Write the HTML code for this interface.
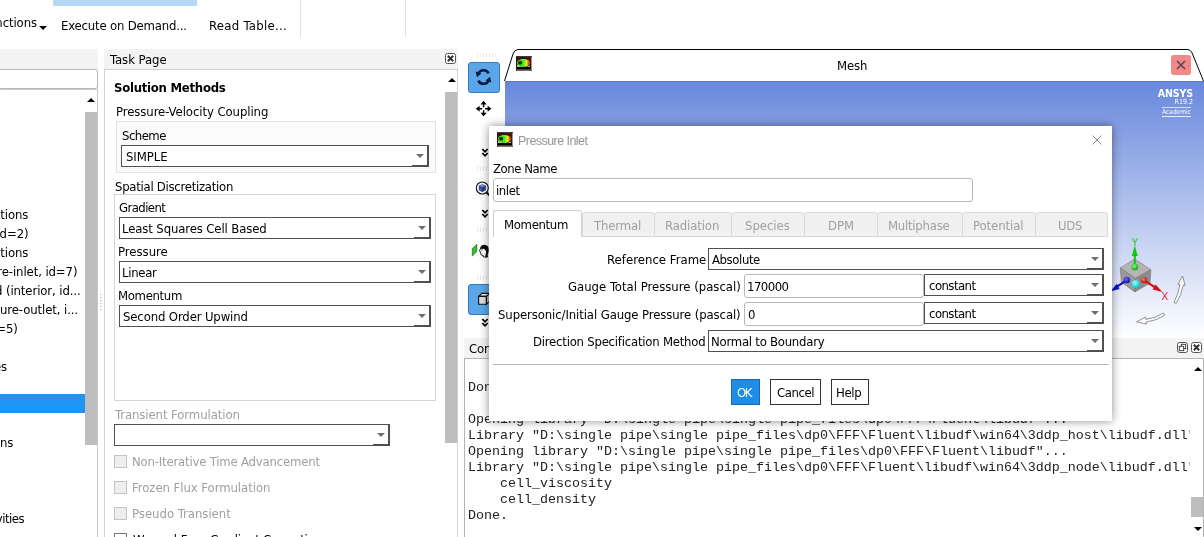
<!DOCTYPE html>
<html><head><meta charset="utf-8">
<style>
html,body{margin:0;padding:0;}
body{width:1204px;height:537px;overflow:hidden;position:relative;background:#f0f0f0;font-family:"DejaVu Sans Condensed","Liberation Sans",sans-serif;font-size:13px;letter-spacing:-0.1px;color:#000;}
.a{position:absolute;}
.t{will-change:transform;position:absolute;white-space:nowrap;line-height:16px;height:16px;margin-top:1px;}
.g{color:#a0a0a0;}
.combo{position:absolute;background:#fff;border:1px solid #505050;border-right:2px solid #505050;box-sizing:border-box;height:22px;}
.combo .t{left:3px;top:2px;}
.combo:after{content:"";position:absolute;right:3px;top:8px;border-left:4px solid transparent;border-right:4px solid transparent;border-top:4px solid #6e6e6e;}
.combo:before{content:"";position:absolute;right:-1px;bottom:0;width:15px;height:1px;background:#505050;border-right:1px solid #505050;}
.cb{position:absolute;width:13px;height:13px;box-sizing:border-box;border:1px solid #c4c4c4;background:#eee;}
.tab{position:absolute;top:212px;height:25px;box-sizing:border-box;border:1px solid #d9d9d9;background:#f0f0f0;color:#a0a0a0;text-align:center;line-height:25px;border-radius:3px 3px 0 0;}
.inp{position:absolute;box-sizing:border-box;border:1px solid #b8b8b8;border-radius:3px;background:#fff;}
.mono{font-family:"Liberation Mono",monospace;font-size:13.33px;letter-spacing:0;color:#222;}
.btn{position:absolute;top:379px;height:26px;box-sizing:border-box;border:1px solid #333;background:#fff;text-align:center;line-height:25px;}
</style></head><body>

<!-- top ribbon -->
<div class="a" style="left:0;top:0;width:1204px;height:49px;background:#fff;"></div>
<div class="a" style="left:53px;top:0;width:144px;height:6px;background:#b5d9f5;"></div>
<div class="t" style="left:-12px;top:14px;">unctions</div>
<div class="a" style="left:39px;top:26px;border-left:4px solid transparent;border-right:4px solid transparent;border-top:4px solid #000;"></div>
<div class="t" style="top:17px;left:61.40px;letter-spacing:-0.187px">Execute on Demand...</div>
<div class="t" style="top:17px;left:209.20px;letter-spacing:0.283px">Read Table...</div>
<div class="a" style="left:300px;top:0;width:1px;height:37px;background:#e2e2e2;"></div>
<div class="a" style="left:405px;top:0;width:1px;height:37px;background:#e2e2e2;"></div>

<!-- left tree panel -->
<div class="a" style="left:0;top:49px;width:98px;height:20px;background:#f3f3f3;"></div>
<div class="a" style="left:98px;top:49px;width:6px;height:488px;background:#fff;"></div>
<div class="a" style="left:-2px;top:69px;width:100px;height:20px;box-sizing:border-box;border:1px solid #b8b8b8;border-radius:3px;background:#fff;"></div>
<div class="a" style="left:-2px;top:89px;width:100px;height:460px;box-sizing:border-box;border:1px solid #c8c8c8;background:#fff;"></div>
<div class="a" style="left:85px;top:91px;width:11px;height:446px;background:#fff;"></div>
<div class="a" style="left:85px;top:112px;width:12px;height:333px;background:#bdbdbd;"></div>
<div class="a" style="left:87px;top:98px;border-left:4px solid transparent;border-right:4px solid transparent;border-bottom:4px solid #000;"></div>
<div class="t" style="left:-6px;top:206px;">ctions</div>
<div class="t" style="left:-8px;top:225px;">(id=2)</div>
<div class="t" style="left:-6px;top:244px;">ctions</div>
<div class="t" style="left:-10px;top:263px;">ure-inlet, id=7)</div>
<div class="t" style="left:-5px;top:282px;">d (interior, id...</div>
<div class="t" style="left:-6px;top:301px;">sure-outlet, i...</div>
<div class="t" style="left:-11px;top:320px;">d=5)</div>
<div class="t" style="left:-6px;top:358px;">es</div>
<div class="a" style="left:0;top:394px;width:85px;height:19px;background:#2094f4;"></div>
<div class="t" style="left:-7px;top:434px;">ons</div>
<div class="t" style="left:-11px;top:510px;letter-spacing:-0.5px;">tivities</div>

<div class="a" style="left:100px;top:293px;width:2px;height:18px;background-image:radial-gradient(circle,#cfcfcf 0.7px,transparent 0.9px);background-size:2px 3px;"></div>
<!-- task page -->
<div class="a" style="left:104px;top:49px;width:354px;height:20px;background:#f3f3f3;"></div>
<div class="t" style="top:51px;left:110.00px;letter-spacing:-0.037px">Task Page</div>
<svg class="a" style="left:445px;top:53px;" width="11" height="11" viewBox="0 0 11 11"><rect x="0.5" y="0.5" width="10" height="10" rx="2" fill="#fff" stroke="#555"/><path d="M2.8 2.8 L8.2 8.2 M8.2 2.8 L2.8 8.2" stroke="#333" stroke-width="2"/></svg>
<div class="a" style="left:104px;top:69px;width:354px;height:480px;box-sizing:border-box;border:1px solid #d0d0d0;background:#fff;"></div>
<div class="a" style="left:445px;top:92px;width:12px;height:351px;background:#bdbdbd;"></div>
<div class="a" style="left:448px;top:78px;border-left:4px solid transparent;border-right:4px solid transparent;border-bottom:4px solid #000;"></div>
<div class="a" style="left:458px;top:49px;width:8px;height:488px;background:#fff;"></div>

<div class="t" style="top:79px;font-weight:bold;left:114.20px;letter-spacing:-0.262px">Solution Methods</div>
<div class="t" style="top:103px;left:115.60px;letter-spacing:-0.079px">Pressure-Velocity Coupling</div>
<div class="a" style="left:116px;top:121px;width:320px;height:52px;box-sizing:border-box;border:1px solid #e3e3e3;background:#fbfbfb;"></div>
<div class="t" style="top:127px;left:121.60px;letter-spacing:-0.533px">Scheme</div>
<div class="combo" style="left:121px;top:145px;width:308px;"></div><div class="t" style="top:148px;left:125.60px;letter-spacing:-0.066px">SIMPLE</div>
<div class="t" style="top:178px;left:114.70px;letter-spacing:-0.272px">Spatial Discretization</div>
<div class="a" style="left:114px;top:194px;width:322px;height:207px;box-sizing:border-box;border:1px solid #d5d5d5;background:#fff;"></div>
<div class="t" style="top:199px;left:119.40px;letter-spacing:-0.575px">Gradient</div>
<div class="combo" style="left:119px;top:217px;width:312px;"></div><div class="t" style="top:220px;left:122.20px;letter-spacing:-0.120px">Least Squares Cell Based</div>
<div class="t" style="top:243px;left:118.40px;letter-spacing:-0.009px">Pressure</div>
<div class="combo" style="left:119px;top:261px;width:312px;"></div><div class="t" style="top:264px;left:122.20px;letter-spacing:-0.288px">Linear</div>
<div class="t" style="top:287px;left:118.40px;letter-spacing:-0.336px">Momentum</div>
<div class="combo" style="left:119px;top:305px;width:312px;"></div><div class="t" style="top:308px;left:123.20px;letter-spacing:-0.134px">Second Order Upwind</div>
<div class="t g" style="top:406px;left:115.30px;letter-spacing:-0.079px">Transient Formulation</div>
<div class="combo" style="left:114px;top:424px;width:276px;"></div>
<div class="cb" style="left:114px;top:455px;"></div><div class="t g" style="top:453px;left:132.40px;letter-spacing:-0.194px">Non-Iterative Time Advancement</div>
<div class="cb" style="left:114px;top:481px;"></div><div class="t g" style="top:479px;left:132.40px;letter-spacing:-0.052px">Frozen Flux Formulation</div>
<div class="cb" style="left:114px;top:507px;"></div><div class="t g" style="top:505px;left:132.40px;letter-spacing:-0.013px">Pseudo Transient</div>
<div class="cb" style="left:114px;top:533px;background:#fff;border-color:#777;"></div><div class="t" style="top:531px;left:133.40px;letter-spacing:-0.169px">Warped-Face Gradient Correction</div>

<!-- vertical toolbar -->
<div class="a" id="vtb" style="left:466px;top:49px;width:40px;height:289px;background:#fff;"></div>
<div class="a" style="left:466px;top:49px;width:738px;height:33px;background:#fff;"></div>
<div class="a" style="left:468px;top:62px;width:32px;height:31px;box-sizing:border-box;border:1px solid #3478c0;border-radius:3px;background:#5aa6e8;"></div>
<div class="a" style="left:468px;top:284px;width:32px;height:31px;box-sizing:border-box;border:1px solid #3478c0;border-radius:3px;background:#5aa6e8;"></div>


<!-- toolbar icons -->
<svg class="a" style="left:468px;top:62px;" width="32" height="31" viewBox="0 0 32 31">
<path d="M10.2 12.2 A5.6 5.6 0 0 1 20.6 11.4" fill="none" stroke="#0c1840" stroke-width="2.6"/>
<path d="M7.6 9.6 L13.4 11.6 L9 15.2 Z" fill="#0c1840"/>
<path d="M20.8 17.8 A5.6 5.6 0 0 1 10.4 18.6" fill="none" stroke="#0c1840" stroke-width="2.6"/>
<path d="M23.4 20.4 L17.6 18.4 L22 14.8 Z" fill="#0c1840"/>
</svg>
<svg class="a" style="left:475px;top:100px;" width="18" height="18" viewBox="0 0 18 18">
<path d="M8.6 3 V7.2 M8.6 10.2 V14.4 M3 8.7 H7.1 M10.1 8.7 H14.2" stroke="#000" stroke-width="1.4" fill="none"/>
<path d="M8.6 0.8 L11.6 4.6 H5.6 Z M8.6 16.6 L11.6 12.8 H5.6 Z M0.8 8.7 L4.6 5.7 V11.7 Z M16.4 8.7 L12.6 5.7 V11.7 Z" fill="#000"/>
</svg>

<div class="a" style="left:476px;top:53px;width:20px;height:5px;background-image:radial-gradient(circle,#f0d8c8 0.7px,transparent 0.9px);background-size:3px 2.5px;"></div>
<svg class="a" style="left:481px;top:148px;" width="8" height="10" viewBox="0 0 8 10"><path d="M1.3 1 L4 3.8 L6.7 1 M1.3 5 L4 7.8 L6.7 5" fill="none" stroke="#000" stroke-width="1.8"/></svg>
<div class="a" style="left:476px;top:166px;width:13px;height:5px;background-image:radial-gradient(circle,#d9d9d9 0.7px,transparent 0.9px);background-size:3px 2.5px;"></div>
<svg class="a" style="left:474px;top:180px;" width="18" height="18" viewBox="0 0 18 18">
<path d="M12.6 12.4 L15.6 15.6" stroke="#111" stroke-width="2.2"/>
<circle cx="8.3" cy="8" r="6" fill="#fff" stroke="#111" stroke-width="1.1"/>
<path d="M5 6 L8.3 4.4 L11.6 6 L8.3 7.6 Z" fill="#7a9ad8" stroke="#1a2a6a" stroke-width="0.5"/>
<path d="M5 6 V10 L8.3 11.8 V7.6 Z" fill="#3a5ab0" stroke="#1a2a6a" stroke-width="0.5"/>
<path d="M11.6 6 V10 L8.3 11.8 V7.6 Z" fill="#24408a" stroke="#1a2a6a" stroke-width="0.5"/>
</svg>
<svg class="a" style="left:481px;top:209px;" width="8" height="10" viewBox="0 0 8 10"><path d="M1.3 1 L4 3.8 L6.7 1 M1.3 5 L4 7.8 L6.7 5" fill="none" stroke="#000" stroke-width="1.8"/></svg>
<div class="a" style="left:476px;top:227px;width:13px;height:5px;background-image:radial-gradient(circle,#d9d9d9 0.7px,transparent 0.9px);background-size:3px 2.5px;"></div>
<svg class="a" style="left:470px;top:242px;" width="20" height="16" viewBox="0 0 20 16">
<path d="M2.3 6.6 L6.8 2.2 V9.6 L2.3 14 Z" fill="#2fc02f" stroke="#157015" stroke-width="0.7"/>
<path d="M10.8 5.8 L9.4 9 L10.4 9.5 L10.2 11 L11 11.4 L11 12.9 L13.2 13.4 L13.4 15 L17 15 L16.6 6 Z" fill="#fff" stroke="#111" stroke-width="0.9"/>
<path d="M10.2 6.4 Q10.8 2.8 14.4 2.8 Q18.8 3 18.7 8 Q18.8 11 17.5 12.4 L18.1 15.2 L15.4 15.2 L15.4 12.4 Q16.8 10.6 15.6 8.6 Q15 6.4 13 6.7 Q11.4 7 10.2 6.4 Z" fill="#0a0a0a"/>
<path d="M11.2 8 L12.6 7.7" stroke="#111" stroke-width="0.8"/>
</svg>
<div class="a" style="left:476px;top:275px;width:13px;height:5px;background-image:radial-gradient(circle,#d9d9d9 0.7px,transparent 0.9px);background-size:3px 2.5px;"></div>
<svg class="a" style="left:468px;top:284px;" width="32" height="31" viewBox="0 0 32 31">
<path d="M10.6 12.4 L14 9.4 H21.8 L18.4 12.4 Z" fill="#f6f6f6" stroke="#111" stroke-width="1.1"/>
<path d="M10.6 12.4 H18.4 V20.2 H10.6 Z" fill="#dedede" stroke="#111" stroke-width="1.1"/>
<path d="M18.4 12.4 L21.8 9.4 V17.2 L18.4 20.2 Z" fill="#b0b0b0" stroke="#111" stroke-width="1.1"/>
</svg>
<svg class="a" style="left:481px;top:318px;" width="8" height="10" viewBox="0 0 8 10"><path d="M1.3 1 L4 3.8 L6.7 1 M1.3 5 L4 7.8 L6.7 5" fill="none" stroke="#000" stroke-width="1.8"/></svg>

<!-- mesh window -->
<div class="a" style="left:505px;top:81px;width:699px;height:257px;background:linear-gradient(#6888dc 0,#ffffff 100%);"></div>
<div class="a" style="left:505px;top:81px;width:699px;height:1px;background:rgba(40,40,60,0.18);"></div>
<svg class="a" style="left:500px;top:45px;" width="704" height="40" viewBox="0 0 704 40"><path d="M4.5 36 L13 9 Q14.2 4.8 18 4.5 L687 4.5 Q691 4.5 692.5 9 L703.5 36 Z" fill="#fff" stroke="none"/><path d="M4.5 36 L13 9 Q14.2 4.8 18 4.5 L687 4.5 Q691 4.5 692.5 9 L703.5 36" fill="none" stroke="#000" stroke-width="1"/></svg>
<svg class="a" style="left:516px;top:56px;" width="16" height="15" viewBox="0 0 16 15">
<defs><linearGradient id="mg1" x1="0" x2="1" y1="0" y2="0"><stop offset="0" stop-color="#20c020"/><stop offset="0.5" stop-color="#40f020"/><stop offset="0.75" stop-color="#f0f020"/><stop offset="0.95" stop-color="#e03010"/></linearGradient></defs>
<rect width="16" height="15" fill="#30180a"/><rect x="10.5" y="1" width="5" height="9" fill="#5a1206"/><rect x="0" y="0" width="16" height="1" fill="#3c3c3c"/>
<ellipse cx="7.4" cy="6.9" rx="6.3" ry="3.9" fill="#c8d840"/>
<ellipse cx="7.6" cy="7" rx="6" ry="3.5" fill="url(#mg1)"/>
<ellipse cx="4.1" cy="6.7" rx="2.1" ry="1.8" fill="#0a3208"/>
<path d="M1 8.8 Q7 12.6 14 9.8 L14 11 L1 11 Z" fill="#86f0b0"/>
<rect x="0.8" y="11" width="13.8" height="2.2" fill="#040404"/>
<path d="M0.5 14.2 H15.5 V1" fill="none" stroke="#9a9a9a" stroke-width="1"/>
</svg>
<div class="t" style="top:57px;left:836.60px;letter-spacing:-0.162px">Mesh</div>


<!-- mesh close -->
<div class="a" style="left:1171px;top:55px;width:20px;height:20px;border-radius:3px;background:#f28888;"></div>
<svg class="a" style="left:1171px;top:55px;" width="20" height="20" viewBox="0 0 20 20"><path d="M6 6 L14 14 M14 6 L6 14" stroke="#5a4650" stroke-width="1.6"/></svg>
<!-- ansys logo -->
<div class="t" style="left:1133px;top:84px;width:60px;text-align:right;color:#fff;font-weight:bold;font-size:10.5px;letter-spacing:-0.1px;">ANSYS</div>
<div class="t" style="left:1133px;top:93px;width:60px;text-align:right;color:#fff;font-size:7px;letter-spacing:0;">R19.2</div>
<div class="t" style="left:1162px;top:103px;width:29px;text-align:center;color:#fff;font-size:6.5px;letter-spacing:0;">Academic</div>
<div class="a" style="left:1162px;top:107px;width:29px;height:1px;background:rgba(255,255,255,0.7);"></div>
<div class="a" style="left:1162px;top:116px;width:29px;height:1px;background:rgba(255,255,255,0.85);"></div>


<!-- triad -->
<svg class="a" style="left:1108px;top:234px;" width="96" height="96" viewBox="0 0 96 96">
<defs>
<radialGradient id="sg" cx="0.4" cy="0.35" r="0.7"><stop offset="0" stop-color="#7dff7d"/><stop offset="1" stop-color="#0a9a0a"/></radialGradient>
<radialGradient id="sr" cx="0.4" cy="0.35" r="0.7"><stop offset="0" stop-color="#ff7a7a"/><stop offset="1" stop-color="#b00808"/></radialGradient>
<radialGradient id="sb" cx="0.4" cy="0.35" r="0.7"><stop offset="0" stop-color="#6a6aff"/><stop offset="1" stop-color="#0808a8"/></radialGradient>
<radialGradient id="sc" cx="0.4" cy="0.35" r="0.7"><stop offset="0" stop-color="#9affff"/><stop offset="1" stop-color="#08b8c8"/></radialGradient>
</defs>
<path d="M12.2 34 L26.8 25 L42.9 35.8 L27.4 44.5 Z" fill="#b4b4b4" stroke="#777" stroke-width="0.6"/>
<path d="M12.2 34 L27.4 44.5 L26.8 58 L13.4 48.3 Z" fill="#9a9a9a" stroke="#777" stroke-width="0.6"/>
<path d="M42.9 35.8 L27.4 44.5 L26.8 58 L42 49 Z" fill="#8c8c8c" stroke="#777" stroke-width="0.6"/>
<!-- green Y -->
<path d="M25.8 33 V20 H27.8 V33 Z" fill="#12c412"/>
<path d="M26.8 11.5 L29.8 22 H23.8 Z" fill="#10c810"/>
<circle cx="26.8" cy="33" r="3.3" fill="url(#sg)"/>
<text x="26.8" y="12" font-size="10" fill="#22cc22" text-anchor="middle" font-family="Liberation Sans, sans-serif">Y</text>
<!-- red X -->
<path d="M35.8 45 L48 52.6 L47 54.4 L34.8 47 Z" fill="#d01616"/>
<path d="M54.4 58 L44.6 55.6 L47.6 50.4 Z" fill="#d41414"/>
<circle cx="35.8" cy="46" r="3.2" fill="url(#sr)"/>
<text x="56.8" y="66" font-size="10" fill="#e02020" text-anchor="middle" font-family="Liberation Sans, sans-serif">X</text>
<!-- blue Z -->
<path d="M18.8 45 L8 52 L9 53.8 L19.8 47 Z" fill="#1212c8"/>
<path d="M2.6 57.2 L11.6 55 L8.8 49.8 Z" fill="#1010d0"/>
<circle cx="18.8" cy="46" r="3.3" fill="url(#sb)"/>
<circle cx="27.7" cy="50" r="4.1" fill="url(#sc)"/>
<!-- outlined arrows -->
<path d="M66 68.4 Q70.5 60 72 50.6 L70 50.2 L74.6 42 L77.2 51.4 L75.2 51 Q73.4 61 68.2 69.4 Z" fill="#fff" stroke="#666" stroke-width="0.7"/>
<path d="M55.6 79 Q47 84.4 37.8 85.4 L37.6 83.2 L28.6 87.8 L38.4 90 L38.2 88 Q48.4 86.8 56.6 81.2 Z" fill="#fff" stroke="#666" stroke-width="0.7"/>
</svg>

<!-- console -->
<div class="a" style="left:464px;top:338px;width:740px;height:20px;background:#f3f3f3;"></div>
<div class="t" style="left:469px;top:340px;">Console</div>
<div class="a" style="left:464px;top:358px;width:740px;height:190px;box-sizing:border-box;border:1px solid #b4b4b4;background:#fff;"></div>
<div class="a" style="left:466px;top:359px;width:724px;height:178px;overflow:hidden;">
<div class="t mono" style="left:2px;top:20px;">Done.</div>
<div class="t mono" style="left:2px;top:52px;">Opening library "D:\single pipe\single pipe_files\dp0\FFF\Fluent\libudf"...</div>
<div class="t mono" style="left:2px;top:68px;">Library "D:\single pipe\single pipe_files\dp0\FFF\Fluent\libudf\win64\3ddp_host\libudf.dll"</div>
<div class="t mono" style="left:2px;top:84px;">Opening library "D:\single pipe\single pipe_files\dp0\FFF\Fluent\libudf"...</div>
<div class="t mono" style="left:2px;top:100px;">Library "D:\single pipe\single pipe_files\dp0\FFF\Fluent\libudf\win64\3ddp_node\libudf.dll"</div>
<div class="t mono" style="left:34px;top:116px;">cell_viscosity</div>
<div class="t mono" style="left:34px;top:132px;">cell_density</div>
<div class="t mono" style="left:2px;top:148px;">Done.</div>
</div>
<div class="a" style="left:1191px;top:497px;width:12px;height:20px;background:#bdbdbd;"></div>
<div class="a" style="left:1194px;top:367px;border-left:4px solid transparent;border-right:4px solid transparent;border-bottom:4px solid #000;"></div>
<div class="a" style="left:1194px;top:527px;border-left:4px solid transparent;border-right:4px solid transparent;border-top:4px solid #000;"></div>

<svg class="a" style="left:1177px;top:342px;" width="11" height="11" viewBox="0 0 11 11"><rect x="0.5" y="0.5" width="10" height="10" rx="2" fill="#fff" stroke="#555"/><rect x="4.3" y="2.3" width="4.4" height="4.4" fill="#fff" stroke="#333" stroke-width="0.9"/><rect x="2.3" y="4.3" width="4.4" height="4.4" fill="#fff" stroke="#333" stroke-width="0.9"/></svg>
<svg class="a" style="left:1191px;top:342px;" width="11" height="11" viewBox="0 0 11 11"><rect x="0.5" y="0.5" width="10" height="10" rx="2" fill="#fff" stroke="#555"/><path d="M2.8 2.8 L8.2 8.2 M8.2 2.8 L2.8 8.2" stroke="#333" stroke-width="2"/></svg>

<!-- dialog -->
<div class="a" style="left:489px;top:126px;width:623px;height:295px;background:#fff;box-shadow:0 0 9px rgba(0,0,0,0.45);"></div>
<svg class="a" style="left:497px;top:132px;" width="16" height="15" viewBox="0 0 16 15">
<defs><linearGradient id="mg2" x1="0" x2="1" y1="0" y2="0"><stop offset="0" stop-color="#20c020"/><stop offset="0.5" stop-color="#40f020"/><stop offset="0.75" stop-color="#f0f020"/><stop offset="0.95" stop-color="#e03010"/></linearGradient></defs>
<rect width="16" height="15" fill="#30180a"/><rect x="10.5" y="1" width="5" height="9" fill="#5a1206"/><rect x="0" y="0" width="16" height="1" fill="#3c3c3c"/>
<ellipse cx="7.4" cy="6.9" rx="6.3" ry="3.9" fill="#c8d840"/>
<ellipse cx="7.6" cy="7" rx="6" ry="3.5" fill="url(#mg2)"/>
<ellipse cx="4.1" cy="6.7" rx="2.1" ry="1.8" fill="#0a3208"/>
<path d="M1 8.8 Q7 12.6 14 9.8 L14 11 L1 11 Z" fill="#86f0b0"/>
<rect x="0.8" y="11" width="13.8" height="2.2" fill="#040404"/>
<path d="M0.5 14.2 H15.5 V1" fill="none" stroke="#9a9a9a" stroke-width="1"/>
</svg>
<div class="t g" style="top:132px;color:#969696;font-family:'Liberation Sans',sans-serif;font-size:12.5px;left:518.00px;letter-spacing:-0.550px">Pressure Inlet</div>
<svg class="a" style="left:1091px;top:134px;" width="12" height="12" viewBox="0 0 12 12"><path d="M1.5 1.5 L10.5 10.5 M10.5 1.5 L1.5 10.5" stroke="#8a8a8a" stroke-width="1"/></svg>
<div class="t" style="top:160px;left:493.40px;letter-spacing:-0.450px">Zone Name</div>
<div class="inp" style="left:493px;top:178px;width:480px;height:24px;"></div>
<div class="t" style="top:182px;left:495.50px;letter-spacing:-0.428px">inlet</div>
<div class="a" style="left:493px;top:210px;width:89px;height:27px;box-sizing:border-box;border:1px solid #d0d0d0;border-bottom:none;border-radius:3px 3px 0 0;background:#fff;"></div>
<div class="t" style="top:216px;left:504.40px;letter-spacing:-0.336px">Momentum</div>

<div class="tab" style="left:582px;width:73px;"></div><div class="t g" style="top:217px;left:594.00px;letter-spacing:-0.165px">Thermal</div>
<div class="tab" style="left:654px;width:78px;"></div><div class="t g" style="top:217px;left:665.00px;letter-spacing:-0.117px">Radiation</div>
<div class="tab" style="left:731px;width:74px;"></div><div class="t g" style="top:217px;left:745.30px;letter-spacing:-0.038px">Species</div>
<div class="tab" style="left:804px;width:74px;"></div><div class="t g" style="top:217px;left:827.60px;letter-spacing:-0.030px">DPM</div>
<div class="tab" style="left:877px;width:86px;"></div><div class="t g" style="top:217px;left:888.20px;letter-spacing:-0.243px">Multiphase</div>
<div class="tab" style="left:962px;width:74px;"></div><div class="t g" style="top:217px;left:972.70px;letter-spacing:-0.080px">Potential</div>
<div class="tab" style="left:1035px;width:73px;"></div><div class="t g" style="top:217px;left:1058.20px;letter-spacing:-0.335px">UDS</div>

<div class="t" style="top:251px;left:606.50px;letter-spacing:0.031px">Reference Frame</div>
<div class="combo" style="left:708px;top:248px;width:396px;"></div><div class="t" style="top:251px;left:712.30px;letter-spacing:-0.403px">Absolute</div>
<div class="t" style="top:278px;left:567.80px;letter-spacing:-0.009px">Gauge Total Pressure (pascal)</div>
<div class="inp" style="left:744px;top:274px;width:180px;height:24px;"></div>
<div class="t" style="top:278px;left:746.80px;letter-spacing:-0.519px">170000</div>
<div class="combo" style="left:924px;top:274px;width:180px;"></div><div class="t" style="top:277px;left:928.60px;letter-spacing:-0.551px">constant</div>
<div class="t" style="top:306px;left:497.90px;letter-spacing:-0.102px">Supersonic/Initial Gauge Pressure (pascal)</div>
<div class="inp" style="left:744px;top:302px;width:180px;height:24px;"></div>
<div class="t" style="top:306px;left:747.80px;letter-spacing:0.000px">0</div>
<div class="combo" style="left:924px;top:302px;width:180px;"></div><div class="t" style="top:305px;left:928.60px;letter-spacing:-0.551px">constant</div>
<div class="t" style="top:333px;left:533.40px;letter-spacing:-0.227px">Direction Specification Method</div>
<div class="combo" style="left:708px;top:330px;width:396px;"></div><div class="t" style="top:333px;left:711.00px;letter-spacing:-0.244px">Normal to Boundary</div>
<div class="a" style="left:493px;top:364px;width:616px;height:1px;background:#b8b8b8;"></div>
<div class="btn" style="left:731px;width:29px;background:#1e8de6;border-color:#1a64b0;"></div><div class="t" style="top:384px;color:#fff;left:737.20px;letter-spacing:-1.404px">OK</div>
<div class="btn" style="left:770px;width:51px;"></div><div class="t" style="top:384px;left:776.50px;letter-spacing:-0.436px">Cancel</div>
<div class="btn" style="left:831px;width:38px;"></div><div class="t" style="top:384px;left:836.30px;letter-spacing:-0.349px">Help</div>

</body></html>
